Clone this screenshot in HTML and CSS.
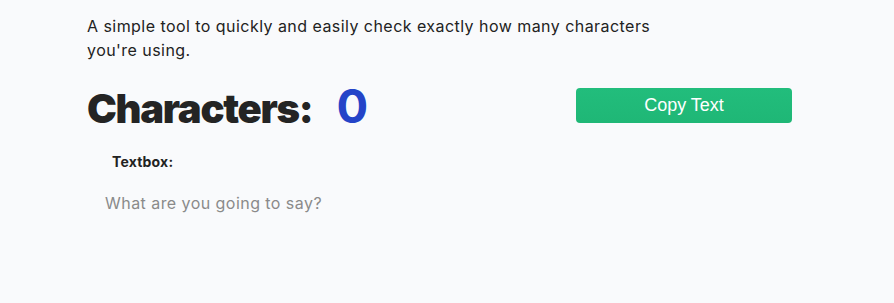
FILE: index.html
```html
<!DOCTYPE html>
<html lang="en">
<head>
<meta charset="utf-8">
<title>Character Counter</title>
<link rel="stylesheet" href="styles.css">
</head>
<body>
<main class="page">
  <p class="desc">A simple tool to quickly and easily check exactly how many characters you're using.</p>
  <div class="row">
    <h1 class="title">Characters: <span class="count">0</span></h1>
    <button class="copy" type="button">Copy Text</button>
  </div>
  <label class="label" for="tb">Textbox:</label>
  <textarea id="tb" class="box" placeholder="What are you going to say?"></textarea>
</main>
</body>
</html>
```

FILE: styles.css
```css
html, body {
  margin: 0;
  background: #f9fafc;
}
body {
  font-family: Inter, "Liberation Sans", Arial, sans-serif;
  color: #222;
}
.page {
  width: 705px;
  padding: 14px 0 0 87px;
  display: flex;
  flex-direction: column;
}
.desc {
  margin: 0;
  max-width: 590px;
  font-size: 16px;
  line-height: 24px;
  letter-spacing: 0.45px;
}
.row {
  display: flex;
  align-items: center;
  justify-content: space-between;
  margin-top: 18px;
}
.title {
  margin: 0;
  padding-top: 4px;
  font-family: Inter, "Liberation Sans", sans-serif;
  font-weight: 900;
  font-size: 40px;
  letter-spacing: -1.3px;
  line-height: 44px;
  color: #242424;
  display: flex;
  align-items: baseline;
}
.count {
  margin-left: 24px;
  font-family: Inter, "Liberation Sans", sans-serif;
  font-weight: 700;
  font-size: 47px;
  letter-spacing: 0;
  color: #2444c8;
}
.copy {
  width: 216px;
  height: 35px;
  margin-top: 0;
  border: 0;
  border-radius: 4px;
  background: linear-gradient(#22bd7c, #1fb776);
  color: #fff;
  font-family: "Liberation Sans", Arial, sans-serif;
  font-size: 18px;
  padding: 0;
  cursor: pointer;
}
.label {
  margin: 22px 0 0 25px;
  font-size: 14px;
  font-weight: 700;
  line-height: 18px;
  letter-spacing: 0.2px;
}
.box {
  margin: 17px 0 0 0;
  width: 560px;
  height: 80px;
  border: 0;
  background: transparent;
  resize: none;
  padding: 4px 18px;
  font-family: Inter, "Liberation Sans", Arial, sans-serif;
  font-size: 16px;
  line-height: 22px;
  letter-spacing: 0.45px;
  color: #222;
  outline: none;
}
.box::placeholder {
  color: #8a8a8a;
}
```
